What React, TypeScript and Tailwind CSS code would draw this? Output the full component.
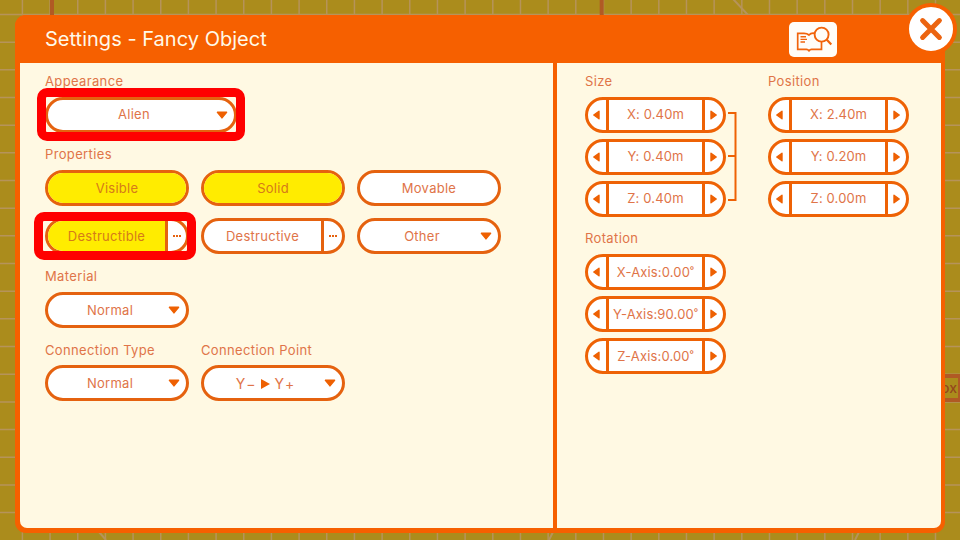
import type { ReactNode } from "react";

const TONE = "text-[#e07448]";

function Backdrop() {
  const cols = Array.from({ length: 35 }, (_, i) => 22.4 + i * 27.67);
  const rows = Array.from({ length: 19 }, (_, i) => 14.5 + i * 27.67);
  return (
    <svg className="absolute inset-0 h-full w-full" viewBox="0 0 960 540">
      <rect width="960" height="540" fill="#ab8c1c" />
      <g stroke="#b6935a" strokeWidth="1.5">
        {cols.map((x) => (
          <path key={x} d={`M${x} 0V540`} />
        ))}
        {rows.map((y) => (
          <path key={y} d={`M0 ${y}H960`} />
        ))}
        <path d="M733 -1L749 16M99 532L106 540M549 540L553 532M855 540L859 532" strokeWidth="2" />
      </g>
      <path d="M52 0V20M601.7 0V20" stroke="#b05a24" strokeWidth="4" />
      <path d="M930 376H960M930 400H960M960 374V402" stroke="#b05a24" strokeWidth="4" />
      <text x="957" y="392.5" textAnchor="end" fill="#94481c" className="font-['Inter',sans-serif] text-[14px] font-medium">
        ox
      </text>
    </svg>
  );
}

function DownArrow({ className = "" }: { className?: string }) {
  return (
    <svg className={`absolute top-1/2 h-2 w-3 -translate-y-1/2 ${className}`} viewBox="0 0 12 8">
      <path d="M1.4 1.2H10.6L6 6.9Z" fill="#ee6002" stroke="#ee6002" strokeWidth="1.4" strokeLinejoin="round" />
    </svg>
  );
}

function Label({ children }: { children: ReactNode }) {
  return <div className={`h-4 leading-4 whitespace-nowrap tracking-[0.36px] ${TONE}`}>{children}</div>;
}

function Pill({ children, on, wide, drop, more }: { children: ReactNode; on?: boolean; wide?: boolean; drop?: boolean; more?: boolean }) {
  return (
    <div
      className={`relative flex h-9 overflow-hidden rounded-full border-[3px] border-[#e5620f] ${wide ? "w-48" : "w-36"} ${on && !more ? "bg-[#ffec00]" : "bg-white"}`}
    >
      <div
        className={`flex flex-1 items-center justify-center ${wide ? "" : "pt-px"} tracking-[0.27px] ${on ? "bg-[#ffec00] text-[#d57a1a]" : TONE} ${drop ? "pr-[14px]" : ""}`}
      >
        {children}
      </div>
      {drop && <DownArrow className="right-[6px]" />}
      {more && (
        <div className="flex w-[21px] items-center gap-px border-l-[3px] border-[#e5620f] pl-[5px]">
          <i className="h-[2px] w-[2px] bg-[#e5620f]" />
          <i className="h-[2px] w-[2px] bg-[#e5620f]" />
          <i className="h-[2px] w-[2px] bg-[#e5620f]" />
        </div>
      )}
    </div>
  );
}

function Side({ right }: { right?: boolean }) {
  return (
    <div className={`flex w-[18px] items-center ${right ? "justify-start pl-[5px]" : "justify-end pr-[6px]"}`}>
      <svg className={`h-[10px] w-[7px] ${right ? "" : "-scale-x-100"}`} viewBox="0 0 7 10">
        <path d="M1 1.2L6.2 5L1 8.8Z" fill="#ee6002" stroke="#ee6002" strokeWidth="1.4" strokeLinejoin="round" />
      </svg>
    </div>
  );
}

function Stepper({ children, tight }: { children: ReactNode; tight?: boolean }) {
  return (
    <div className="flex h-9 w-[141px] rounded-full border-[3px] border-[#ee6205] bg-white">
      <Side />
      <div
        className={`flex flex-1 items-center justify-center border-x-[3px] border-[#ee6205] whitespace-nowrap ${TONE} ${tight ? "pt-px tracking-[0.16px]" : "tracking-[0.15px]"}`}
      >
        {children}
      </div>
      <Side right />
    </div>
  );
}

function StepperGroup({ title, values, tight }: { title: string; values: string[]; tight?: boolean }) {
  return (
    <div className="flex flex-col gap-[6px]">
      <div className="mb-[2px]">
        <Label>{title}</Label>
      </div>
      {values.map((v) => (
        <Stepper key={v} tight={tight}>
          {v}
        </Stepper>
      ))}
    </div>
  );
}

function Header() {
  return (
    <header className="flex h-12 items-center justify-between bg-[#f66000] pr-[108px] pl-[30px]">
      <h1 className="text-[20px] tracking-[0.02px] whitespace-nowrap text-[#fff9e8]">Settings - Fancy Object</h1>
      <div className="mt-[1px] h-[35px] w-12 rounded-[5px] bg-[#fffdf8]">
        <svg className="h-full w-full" viewBox="0 0 48 35" fill="none" stroke="#f1640c" strokeWidth="1.7">
          <path d="M25.5 11.3Q22 10.7 20 13Q18 11.3 15 11.3H8.7V27.3H17.5Q19 27.3 20 28.8Q21 27.3 22.5 27.3H32.5V20" />
          <path d="M11.5 14.8H17M11.5 17.4H18M11.5 20H16" strokeWidth="1.4" />
          <circle cx="32.6" cy="12.6" r="7" fill="#fffdf8" strokeWidth="1.9" />
          <path d="M37.6 17.6L42.3 22.6" strokeWidth="2.2" />
        </svg>
      </div>
    </header>
  );
}

export default function App() {
  return (
    <div className="relative h-[540px] w-[960px] overflow-hidden font-['Inter','Liberation_Sans',sans-serif] text-[13px] font-normal">
      <Backdrop />
      <div className="relative pt-[15px] pl-[15px]">
        <div className="flex h-[518px] w-[930px] flex-col overflow-hidden rounded-[11px] bg-[#f66000]">
          <Header />
          <div className="flex flex-1 gap-1 pr-1 pb-[5px] pl-[5px]">
            <main className="w-[533px] rounded-bl-[7px] bg-[#fff9e3] pt-[10px] pl-[25px]">
              <Label>Appearance</Label>
              <div className="relative mt-2 w-48">
                <Pill wide drop>
                  Alien
                </Pill>
                <div className="absolute -top-[9px] -left-2 h-[53px] w-[208px] rounded-[10px] border-[9px] border-[#ff0000]" />
              </div>
              <div className="mt-[13px]">
                <Label>Properties</Label>
              </div>
              <div className="mt-2 grid w-max grid-cols-3 gap-3">
                <Pill on>Visible</Pill>
                <Pill on>Solid</Pill>
                <Pill>Movable</Pill>
                <div className="relative">
                  <Pill on more>
                    Destructible
                  </Pill>
                  <div className="absolute -top-[6px] -left-[11px] h-12 w-[162px] rounded-[10px] border-[9px] border-[#ff0000]" />
                </div>
                <Pill more>Destructive</Pill>
                <Pill drop>Other</Pill>
              </div>
              <div className="mt-[14px] mb-2">
                <Label>Material</Label>
              </div>
              <Pill drop>Normal</Pill>
              <div className="mt-[14px] flex gap-3">
                <div className="flex w-36 flex-col gap-[7px]">
                  <Label>Connection Type</Label>
                  <Pill drop>Normal</Pill>
                </div>
                <div className="flex w-36 flex-col gap-[7px]">
                  <Label>Connection Point</Label>
                  <Pill drop>
                    <span className="flex items-center gap-[5px] text-[14px]">
                      <span className="tracking-[2px]">Y−</span>
                      <svg className="-ml-[2px] h-[10px] w-[9px]" viewBox="0 0 9 10">
                        <path d="M0 0L9 5L0 10Z" fill="#ee6002" />
                      </svg>
                      <span className="tracking-[2px]">Y+</span>
                    </span>
                  </Pill>
                </div>
              </div>
            </main>
            <aside className="flex-1 rounded-br-[7px] bg-[#fff9e3] pt-[10px] pl-7">
              <div className="flex">
                <StepperGroup title="Size" values={["X: 0.40m", "Y: 0.40m", "Z: 0.40m"]} />
                <svg className="mt-9 mr-[30px] ml-[2px] h-[96px] w-[10px]" viewBox="0 0 10 96" fill="none" stroke="#ee6205" strokeWidth="2">
                  <path d="M0 4H7.5V91H0M0 47H7.5" />
                </svg>
                <StepperGroup title="Position" values={["X: 2.40m", "Y: 0.20m", "Z: 0.00m"]} />
              </div>
              <div className="mt-[13px]">
                <StepperGroup tight title="Rotation" values={["X-Axis:0.00˚", "Y-Axis:90.00˚", "Z-Axis:0.00˚"]} />
              </div>
            </aside>
          </div>
        </div>
      </div>
      <button className="absolute top-[3px] left-[905px] flex h-[52px] w-[52px] items-center justify-center rounded-full border-4 border-[#f66000] bg-white">
        <svg className="h-6 w-6" viewBox="0 0 24 24" stroke="#ec6410" strokeWidth="5" strokeLinecap="round">
          <path d="M3.6 3.6L20.4 20.4M20.4 3.6L3.6 20.4" />
        </svg>
      </button>
    </div>
  );
}
